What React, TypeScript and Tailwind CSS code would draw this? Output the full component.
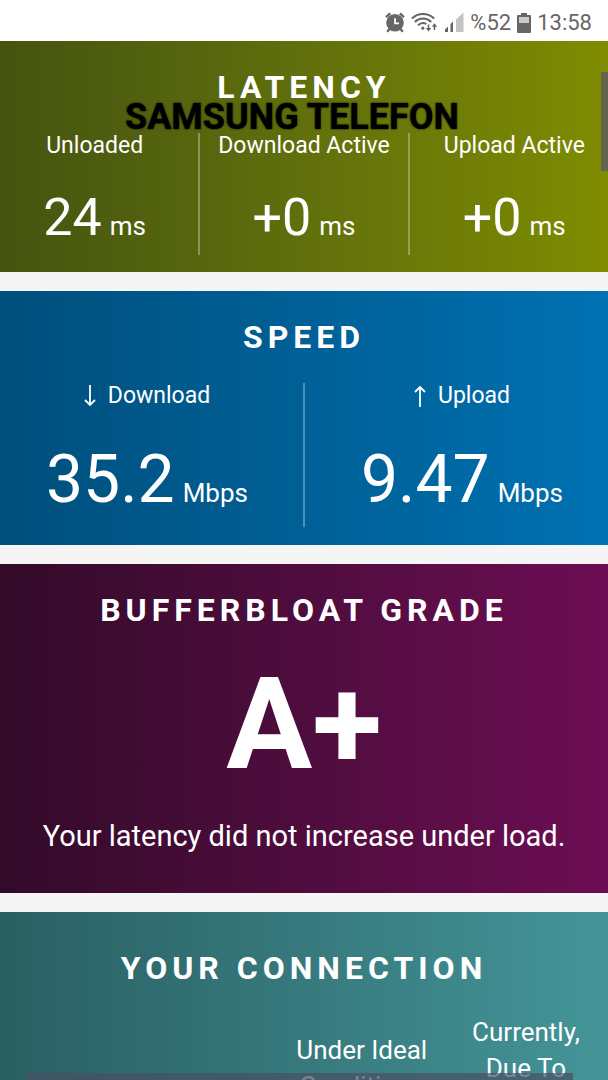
import { clsx } from "clsx";

type Metric = {
    label: string;
    value: string;
    unit: string;
    arrow?: "up" | "down";
};

const latency: Metric[] = [
    { label: "Unloaded", value: "24", unit: "ms" },
    { label: "Download Active", value: "+0", unit: "ms" },
    { label: "Upload Active", value: "+0", unit: "ms" },
];

const speed: Metric[] = [
    { label: "Download", value: "35.2", unit: "Mbps", arrow: "down" },
    { label: "Upload", value: "9.47", unit: "Mbps", arrow: "up" },
];

const AlarmIcon = () => (
    <svg width="20" height="21" viewBox="0 0 20 21" fill="none" aria-hidden="true">
        <path d="M1 5.2 5.2 1.4M19 5.2 14.8 1.4M4.5 17 2.2 19.8M15.5 17l2.3 2.8" stroke="#666" strokeWidth="2.4" />
        <circle cx="10" cy="10.8" r="8.8" fill="#666" />
        <path d="M10 6.2V11.4H14" stroke="#fff" strokeWidth="1.8" />
    </svg>
);

const WifiIcon = () => (
    <svg width="27" height="21" viewBox="0 0 27 21" fill="none" aria-hidden="true">
        <g stroke="#666" strokeWidth="2">
            <path d="M.8 6.5C7 .4 17 .4 23.2 6.5" />
            <path d="M3.8 10C8.5 5.4 15.5 5.4 20.2 10" />
            <path d="M7 13.4C9.5 10.8 13 10.6 15.4 12" />
        </g>
        <circle cx="11.8" cy="16.2" r="1.6" fill="#666" />
        <path d="M17.5 12.5v5M23.5 18v-5" stroke="#666" strokeWidth="1.6" />
        <path d="M14.8 16h5.4l-2.7 3.5zM20.8 14.8h5.4l-2.7-3.6z" fill="#666" />
    </svg>
);

const SignalIcon = () => (
    <svg width="20" height="21" viewBox="0 0 20 21" aria-hidden="true">
        <path d="M1 20v-2.5l3-3V20zM6.5 20v-8L9 9.5V20z" fill="#666" />
        <path d="M12 20V7.5l7.5-7V20z" fill="#c4c4c4" />
    </svg>
);

const BatteryIcon = () => (
    <svg width="14" height="20" viewBox="0 0 14 20" aria-hidden="true">
        <path d="M4 0h6v2h3a1 1 0 0 1 1 1v16a1 1 0 0 1-1 1H1a1 1 0 0 1-1-1V3a1 1 0 0 1 1-1h3z" fill="#666" />
        <path d="M2 4h10v6H2z" fill="#c9c9c9" />
    </svg>
);

const ArrowIcon = ({ direction }: { direction: "up" | "down" }) => (
    <svg
        width="12"
        height="22"
        viewBox="0 0 12 22"
        fill="none"
        stroke="currentColor"
        strokeWidth="1.8"
        className={clsx(direction === "up" && "rotate-180")}
        aria-hidden="true"
    >
        <path d="M6 0v20M1 15l5 5 5-5" />
    </svg>
);

const StatusBar = () => (
    <header className="flex h-[41px] shrink-0 items-center justify-end gap-1.5 bg-white pt-1 pr-4 text-[22px] text-[#666]">
        <AlarmIcon />
        <WifiIcon />
        <SignalIcon />
        <span>%52</span>
        <BatteryIcon />
        <time>13:58</time>
    </header>
);

const SectionTitle = ({ children }: { children: string }) => (
    <h2 className="text-center text-[32px] leading-10 font-bold tracking-[5px] uppercase">{children}</h2>
);

const MetricCell = ({ metric, large }: { metric: Metric; large?: boolean }) => (
    <div className={clsx("flex flex-col items-center border-white/30 not-last:border-r-2", large ? "h-36" : "h-[122px]")}>
        <div className="flex items-center gap-3 text-[23px] leading-[26px] whitespace-nowrap">
            {metric.arrow && <ArrowIcon direction={metric.arrow} />}
            {metric.label}
        </div>
        <div className={clsx("flex items-baseline gap-2", large ? "mt-[34px] text-[66px] leading-[74px]" : "mt-[30px] text-[52px] leading-[58px]")}>
            {metric.value}
            <span className="text-[26px]">{metric.unit}</span>
        </div>
    </div>
);

const App = () => {
    return (
        <div className="relative flex h-screen flex-col overflow-hidden bg-[#f5f5f5] font-[Roboto,sans-serif]">
            <StatusBar />
            <main className="flex flex-col gap-[19px] text-white">
                <section className="relative overflow-hidden bg-linear-to-r from-[#44540f] to-[#7f8c00] pt-[26px] pb-[17px]">
                    <SectionTitle>Latency</SectionTitle>
                    <div className="-mr-[11px] -ml-[9px] mt-[26px] grid grid-cols-3">
                        {latency.map((metric) => (
                            <MetricCell key={metric.label} metric={metric} />
                        ))}
                    </div>
                    <p className="absolute inset-x-0 top-14 pr-6 text-center text-4xl font-bold text-black text-shadow-[0_0_2px_#000000]">
                        SAMSUNG TELEFON
                    </p>
                </section>

                <section className="overflow-hidden bg-linear-to-r from-[#004f7c] to-[#0071b2] pt-[26px] pb-[18px]">
                    <SectionTitle>Speed</SectionTitle>
                    <div className="-mr-[11px] -ml-[9px] mt-[26px] grid grid-cols-2">
                        {speed.map((metric) => (
                            <MetricCell key={metric.label} metric={metric} large />
                        ))}
                    </div>
                </section>

                <section className="bg-linear-to-r from-[#330a29] to-[#6d0d54] pt-[26px] pb-[35px] text-center">
                    <SectionTitle>Bufferbloat Grade</SectionTitle>
                    <p className="mt-7 text-[128px] leading-[132px] font-bold">A+</p>
                    <p className="mt-6 text-[29px] leading-[44px] whitespace-nowrap">Your latency did not increase under load.</p>
                </section>

                <section className="bg-linear-to-r from-[#2a5f62] to-[#449599] pt-9 pb-9">
                    <SectionTitle>Your Connection</SectionTitle>
                    <table className="mt-[26px] w-full table-fixed text-[26px] leading-9">
                        <thead>
                            <tr>
                                <td className="w-[46%]" />
                                <th scope="col" className="px-3 pt-[18px] align-top font-normal">Under Ideal Conditions</th>
                                <th scope="col" className="px-3 align-top font-normal">Currently, Due To</th>
                            </tr>
                        </thead>
                    </table>
                </section>
            </main>

            {/* overlay scroll indicators */}
            <div className="absolute top-[72px] right-0 h-[99px] w-[7px] bg-[#606058]/90" />
            <div className="absolute right-[35px] bottom-0 left-[27px] h-[7px] bg-[#4a4f63]/70" />
        </div>
    );
};

export default App;
